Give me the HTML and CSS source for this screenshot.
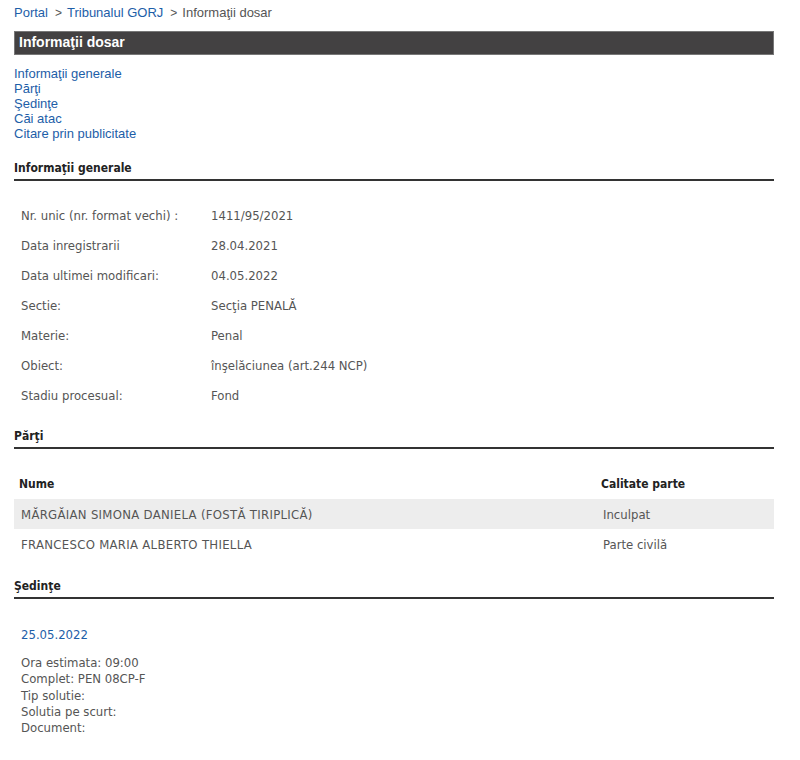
FILE: index.html
```html
<!DOCTYPE html>
<html lang="ro">
<head>
<meta charset="utf-8">
<title>Informaţii dosar</title>
<link rel="stylesheet" href="styles.css">
</head>
<body>
<div class="page">
  <div class="crumbs">
    <a href="#">Portal</a><span class="sep">&gt;</span><a href="#">Tribunalul GORJ</a><span class="sep">&gt;</span><span class="here">Informaţii dosar</span>
  </div>
  <div class="bar">Informaţii dosar</div>
  <ul class="toc">
    <li><a href="#">Informaţii generale</a></li>
    <li><a href="#">Părţi</a></li>
    <li><a href="#">Şedinţe</a></li>
    <li><a href="#">Căi atac</a></li>
    <li><a href="#">Citare prin publicitate</a></li>
  </ul>

  <h2 class="sec sec-first">Informaţii generale</h2>
  <table class="info">
    <tr><td class="lbl">Nr. unic (nr. format vechi) :</td><td>1411/95/2021</td></tr>
    <tr><td class="lbl">Data inregistrarii</td><td>28.04.2021</td></tr>
    <tr><td class="lbl">Data ultimei modificari:</td><td>04.05.2022</td></tr>
    <tr><td class="lbl">Sectie:</td><td>Secţia PENALĂ</td></tr>
    <tr><td class="lbl">Materie:</td><td>Penal</td></tr>
    <tr><td class="lbl">Obiect:</td><td>înşelăciunea (art.244 NCP)</td></tr>
    <tr><td class="lbl">Stadiu procesual:</td><td>Fond</td></tr>
  </table>

  <h2 class="sec">Părţi</h2>
  <table class="parti">
    <thead>
      <tr><th class="c-name">Nume</th><th class="c-cal">Calitate parte</th></tr>
    </thead>
    <tbody>
      <tr class="odd"><td>MĂRGĂIAN SIMONA DANIELA (FOSTĂ TIRIPLICĂ)</td><td class="cal">Inculpat</td></tr>
      <tr><td>FRANCESCO MARIA ALBERTO THIELLA</td><td class="cal">Parte civilă</td></tr>
    </tbody>
  </table>

  <h2 class="sec">Şedinţe</h2>
  <div class="sedinta">
    <div class="date">25.05.2022</div>
    <div class="details">
      <div>Ora estimata: 09:00</div>
      <div>Complet: PEN 08CP-F</div>
      <div>Tip solutie:</div>
      <div>Solutia pe scurt:</div>
      <div>Document:</div>
    </div>
  </div>
</div>
</body>
</html>
```

FILE: styles.css
```css
html, body {
  margin: 0;
  padding: 0;
  background: #fff;
}

.page {
  width: 760px;
  margin-left: 14px;
  font-family: "DejaVu Sans Condensed", "DejaVu Sans", sans-serif;
  font-size: 13px;
  color: #555;
}

a {
  color: #1d5ea8;
  text-decoration: none;
}

.crumbs {
  font-family: "Liberation Sans", Arial, sans-serif;
  font-size: 13px;
  line-height: 15px;
  padding-top: 5px;
  color: #555;
}

.crumbs .sep {
  margin: 0 5px 0 7px;
  font-size: 12px;
}

.bar {
  margin-top: 10px;
  height: 22px;
  line-height: 21px;
  background: #434142;
  border: 1px solid #777;
  color: #fff;
  font-family: "Liberation Sans", Arial, sans-serif;
  font-size: 14px;
  font-weight: bold;
  padding-left: 4px;
}

.toc {
  list-style: none;
  margin: 11px 0 0 0;
  padding: 0;
  font-family: "Liberation Sans", Arial, sans-serif;
  font-size: 13px;
  line-height: 15px;
}

.sec {
  margin: 0;
  font-size: 12px;
  font-weight: bold;
  color: #222;
  line-height: 15px;
  padding-bottom: 3px;
  border-bottom: 2px solid #333;
}

.sec-first {
  margin-top: 20px;
}

.info {
  border-collapse: collapse;
  margin-top: 19px;
  margin-bottom: 19px;
}

.info td {
  height: 30px;
  padding: 0 0 0 7px;
  vertical-align: middle;
}

.info td.lbl {
  width: 183px;
}

.parti {
  width: 100%;
  border-collapse: collapse;
  margin-top: 20px;
  margin-bottom: 20px;
}

.parti th {
  text-align: left;
  color: #222;
  font-weight: bold;
  font-size: 12px;
  height: 30px;
  padding: 0 0 0 5px;
}

.parti th.c-name {
  width: 577px;
}

.parti td {
  height: 30px;
  padding: 0 0 0 7px;
  font-size: 13px;
  letter-spacing: 0.3px;
}

.parti td.cal {
  letter-spacing: 0;
}

.parti tr.odd td {
  background: #ededed;
}

.sedinta {
  padding: 28px 0 0 7px;
}

.date {
  color: #1d5ea8;
  line-height: 16px;
}

.details {
  margin-top: 12px;
  line-height: 16.3px;
}
```
